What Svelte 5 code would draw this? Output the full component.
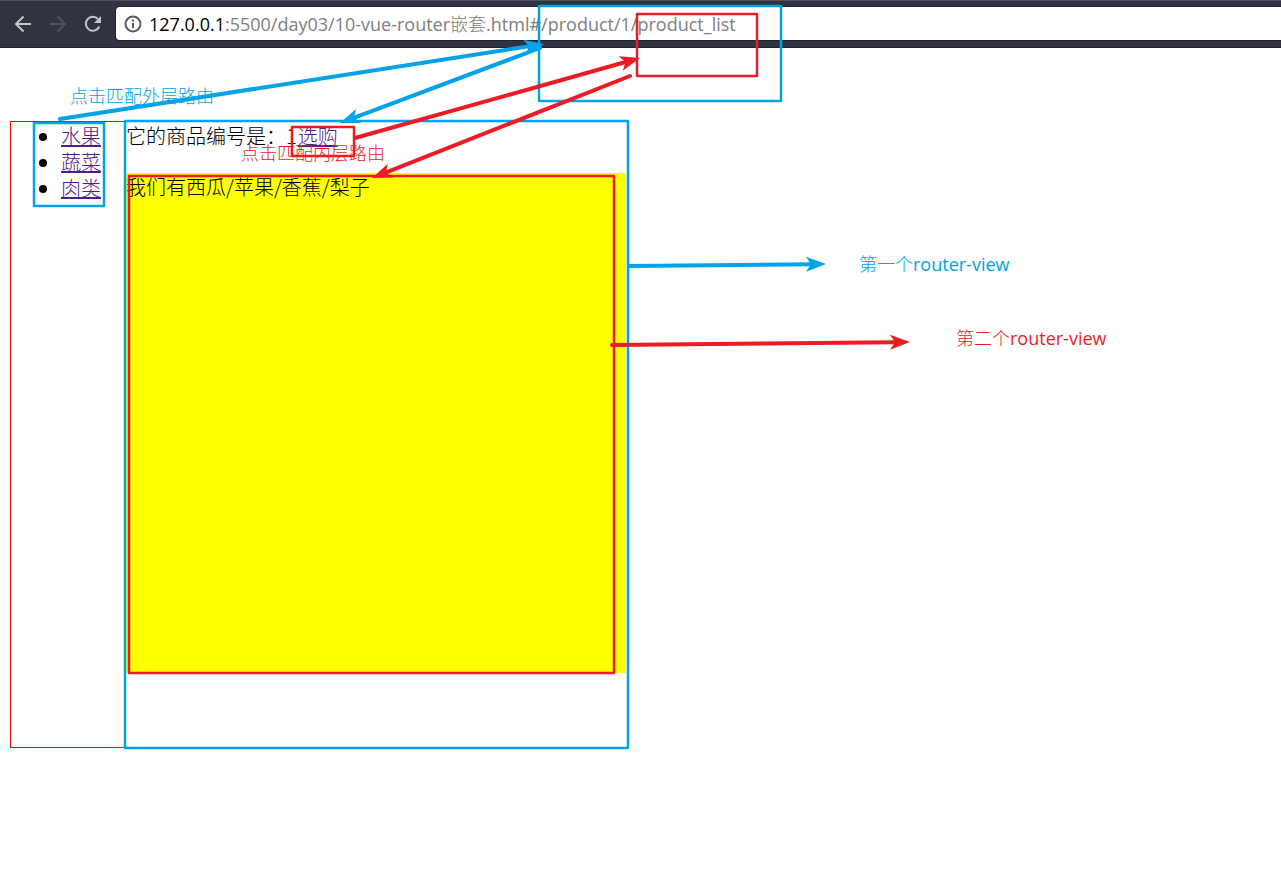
<script>
  const categories = ['水果', '蔬菜', '肉类'];
  const blue = '#00a2e8';
  const red = '#ed1c24';

  const boxes = [
    { x: 34, y: 123, w: 70, h: 83, color: blue },
    { x: 125, y: 121, w: 503, h: 627, color: blue },
    { x: 539, y: 6, w: 242, h: 95, color: blue },
    { x: 292, y: 127, w: 62, h: 29, color: red },
    { x: 129, y: 176, w: 485, h: 497, color: red },
    { x: 637, y: 14, w: 120, h: 62, color: red },
  ];

  const arrows = [
    { from: [60, 119], to: [544, 44], color: blue },
    { from: [540, 48], to: [340, 123], color: blue },
    { from: [629, 266], to: [826, 264], color: blue },
    { from: [355, 138], to: [640, 58], color: red },
    { from: [630, 76], to: [372, 178], color: red },
    { from: [612, 345], to: [910, 342], color: red },
  ].map((a) => {
    const dx = a.to[0] - a.from[0];
    const dy = a.to[1] - a.from[1];
    return { ...a, length: Math.hypot(dx, dy), angle: (Math.atan2(dy, dx) * 180) / Math.PI };
  });
</script>

<header class="toolbar">
  <button aria-label="后退">
    <svg width="20" height="20" viewBox="0 0 20 20" fill="none" stroke="#c5c6c9" stroke-width="2">
      <path d="M18 10H3M10.500 2.500 3 10l7.500 7.500" />
    </svg>
  </button>
  <button aria-label="前进" disabled>
    <svg width="20" height="20" viewBox="0 0 20 20" fill="none" stroke="#50545e" stroke-width="2">
      <path d="M2 10h15M9.500 2.500 17 10l-7.500 7.500" />
    </svg>
  </button>
  <button aria-label="刷新">
    <svg width="20" height="20" viewBox="0 0 20 20">
      <path d="M16.300 12.500A7 7 0 1 1 15 5" fill="none" stroke="#c5c6c9" stroke-width="2" />
      <path d="M18 2v7h-7z" fill="#c5c6c9" />
    </svg>
  </button>
  <div class="address">
    <svg width="18" height="18" viewBox="0 0 18 18">
      <circle cx="9" cy="9" r="7.500" fill="none" stroke="#5a5a5a" stroke-width="2" />
      <path d="M9 8v5M9 4.500v2" stroke="#5a5a5a" stroke-width="2" />
    </svg>
    <span class="url"><b>127.0.0.1</b>:5500/day03/10-vue-router<i>嵌套</i>.html#/product/1/product_list</span>
  </div>
</header>

<main class="shop">
  <ul>
    {#each categories as name}
      <li><a href="#/product">{name}</a></li>
    {/each}
  </ul>
  <section class="product">
    <div>它的商品编号是：1<a href="#/product/1/product_list">选购</a></div>
    <div class="list">我们有西瓜/苹果/香蕉/梨子</div>
  </section>
</main>

<div class="notes">
  <svg width="100%" height="100%" aria-hidden="true">
    {#each boxes as b}
      <rect x={b.x} y={b.y} width={b.w} height={b.h} fill="none" stroke={b.color} stroke-width="2.500" stroke-linejoin="round" />
    {/each}
    {#each arrows as a}
      <g transform="translate({a.to[0]} {a.to[1]}) rotate({a.angle})">
        <path d="M{-a.length} 0H-14" stroke={a.color} stroke-width="4" stroke-linecap="round" />
        <path d="M0 0-20-7.500-15 0-20 7.500z" fill={a.color} />
      </g>
    {/each}
  </svg>
  <span class="note outer-link"><i>点击匹配外层路由</i></span>
  <span class="note inner-link"><i>点击匹配内层路由</i></span>
  <span class="note first-view"><i>第一个</i>router-view</span>
  <span class="note second-view"><i>第二个</i>router-view</span>
</div>

<style>
  :global(body) {
    margin: 0;
    background: #fff;
  }
  :global(#app) {
    position: relative;
    min-height: 100vh;
    overflow: hidden;
  }
  .toolbar {
    display: flex;
    align-items: center;
    box-sizing: border-box;
    height: 48px;
    padding: 0 0 1px 13px;
    gap: 15px;
    background: #303440;
    border-top: 1px solid #4d515b;
    border-bottom: 1px solid #20232e;
  }
  button {
    display: flex;
    padding: 0;
    border: 0;
    background: none;
  }
  .address {
    display: flex;
    flex: 1;
    align-items: center;
    gap: 7px;
    height: 33px;
    margin-left: -2px;
    padding-left: 8px;
    background: #fff;
    border-radius: 3px 0 0 3px;
    outline: 1px solid #20232e;
  }
  .url {
    font: 400 18px/32px "Open Sans", "Noto Sans CJK SC", sans-serif;
    color: #808080;
    white-space: nowrap;
  }
  .url b {
    font-weight: 400;
    color: #000;
  }
  i {
    font-style: normal;
    font-weight: 300;
  }
  .shop {
    display: flex;
    width: fit-content;
    margin: 73px 10px 0;
    padding-top: 1px;
    border: 1px solid red;
    border-right: 0;
    font: 300 20px/26px "Noto Sans CJK SC", sans-serif;
    color: #000;
  }
  ul {
    margin: 0;
    padding: 0 25px 0 50px;
  }
  a {
    color: #551a8b;
  }
  .product {
    width: 500px;
    min-height: 624px;
  }
  .product a {
    margin-left: 1px;
  }
  .list {
    box-sizing: border-box;
    height: 500px;
    margin-top: 24px;
    padding-top: 1px;
    background: #ff0;
  }
  .notes {
    position: absolute;
    inset: 0;
    pointer-events: none;
  }
  .notes svg {
    display: block;
  }
  .note {
    position: absolute;
    font: 400 18px/24px "Open Sans", "Noto Sans CJK SC", sans-serif;
    white-space: nowrap;
  }
  .outer-link {
    left: 70px;
    top: 84px;
    color: #00a2e8;
  }
  .inner-link {
    left: 241px;
    top: 141px;
    color: #ed1c24;
  }
  .first-view {
    left: 859px;
    top: 252px;
    color: #00a2e8;
  }
  .second-view {
    left: 956px;
    top: 326px;
    color: #ed1c24;
  }
</style>
